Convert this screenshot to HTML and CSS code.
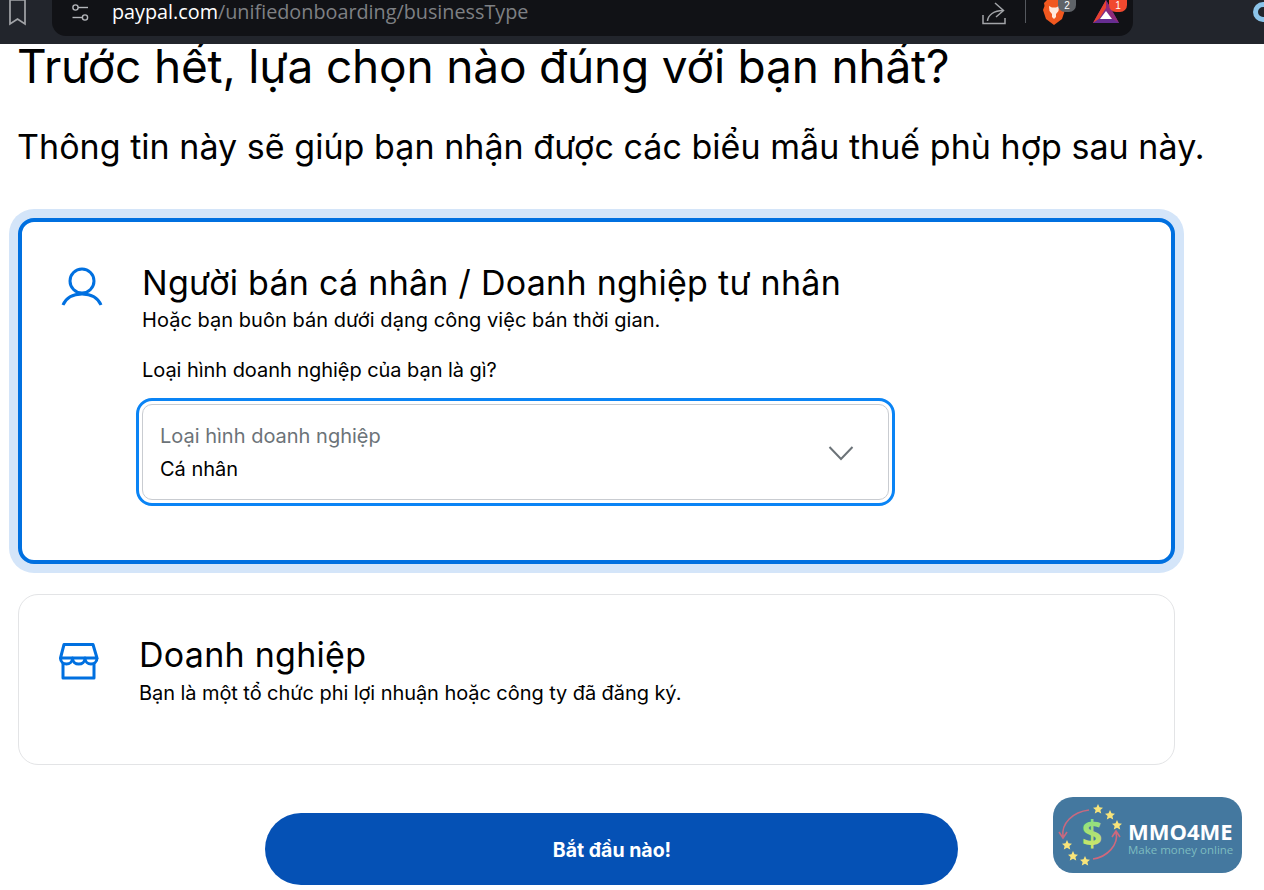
FILE: index.html
```html
<!DOCTYPE html>
<html lang="vi">
<head>
<meta charset="utf-8">
<title>PayPal</title>
<link rel="stylesheet" href="styles.css">
</head>
<body>
<header class="chrome">
  <svg class="bookmark" width="18" height="26" viewBox="0 0 18 26"><path d="M1 0h15v24L8.500 19 1 24z" fill="none" stroke="#a2a4a8" stroke-width="1.700"/></svg>
  <div class="omnibox">
    <svg class="tune" width="20" height="20" viewBox="0 0 20 20" fill="none" stroke="#b4b6ba" stroke-width="1.400"><circle cx="4.500" cy="4.500" r="2.600"/><path d="M7 4.500h10"/><circle cx="14" cy="14.500" r="2.600"/><path d="M1.500 14.500h10"/></svg>
    <div class="url"><span class="domain">paypal.com</span><span class="path">/unifiedonboarding/businessType</span></div>
    <svg class="share" width="24" height="24" viewBox="0 0 24 24" fill="none" stroke="#a2a4a8" stroke-width="1.500"><path d="M1 14v8.500h22V17"/><path d="M5.500 20C6 14 12 9.500 21 9.500"/><path d="M13 2l8.500 7.500L14 16"/></svg>
    <span class="divider"></span>
    <div class="ext ext-lion">
      <svg width="22" height="25" viewBox="0 0 22 25"><path d="M4 0h14l3 3-.5 3 1.500 4-3 9-8 6-8-6-3-9 1.500-4L1 3z" fill="#f1581f"/><path d="M6 6l3 1.500h4L16 6l-.5 5-2.500 3v3l-2 2-2-2v-3l-2.500-3z" fill="#ffe9dc"/></svg>
      <span class="badge badge-grey">2</span>
    </div>
    <div class="ext ext-bat">
      <svg width="26" height="23" viewBox="0 0 26 23"><path d="M13 0l13 23H0z" fill="#7d2c8a"/><path d="M13 0L0 23l6-4 7-11z" fill="#e8412f"/><path d="M13 0v8l6 11 7 4z" fill="#8e2a7a"/><path d="M0 23l6-4h14l6 4z" fill="#662d91"/><path d="M13 11l6 8H7z" fill="#fff"/></svg>
      <span class="badge badge-red">1</span>
    </div>
  </div>
  <span class="profile"></span>
</header>

<main class="page">
  <h1 class="title">Trước hết, lựa chọn nào đúng với bạn nhất?</h1>
  <p class="subtitle">Thông tin này sẽ giúp bạn nhận được các biểu mẫu thuế phù hợp sau này.</p>

  <section class="card card-active">
    <svg class="card-icon" width="42" height="40" viewBox="0 0 42 40" fill="none" stroke="#0070e0" stroke-width="3"><circle cx="21" cy="14" r="12"/><path d="M2 38c3-7 10-11 19-11s16 4 19 11"/></svg>
    <div class="card-body">
      <h2 class="card-title">Người bán cá nhân / Doanh nghiệp tư nhân</h2>
      <p class="card-desc">Hoặc bạn buôn bán dưới dạng công việc bán thời gian.</p>
      <p class="question">Loại hình doanh nghiệp của bạn là gì?</p>
      <div class="select-focus">
        <div class="select">
          <div class="select-text">
            <span class="select-label">Loại hình doanh nghiệp</span>
            <span class="select-value">Cá nhân</span>
          </div>
          <svg class="chevron" width="26" height="16" viewBox="0 0 26 16" fill="none" stroke="#6c7378" stroke-width="2"><path d="M1.500 2l11.500 12L24.500 2"/></svg>
        </div>
      </div>
    </div>
  </section>

  <section class="card card-plain">
    <svg class="card-icon icon-shop" width="40" height="38" viewBox="0 0 40 38" fill="none" stroke="#0070e0" stroke-width="3" stroke-linejoin="round"><path d="M5 2.500h29l4 13.500H1.500z"/><path d="M1.500 16c0 8 12 8 12 0 0 8 12.500 8 12.500 0 0 8 12 8 12 0"/><path d="M4 21v15h31V21"/></svg>
    <div class="card-body">
      <h2 class="card-title">Doanh nghiệp</h2>
      <p class="card-desc">Bạn là một tổ chức phi lợi nhuận hoặc công ty đã đăng ký.</p>
    </div>
  </section>

  <div class="actions"><button class="primary" type="button">Bắt đầu nào!</button></div>
</main>

<aside class="watermark">
  <svg width="74" height="76" viewBox="0 0 74 76">
    <defs>
      <linearGradient id="dollar-fill" x1="0" y1="0" x2="0" y2="1"><stop offset="0" stop-color="#6fdc8c"/><stop offset="1" stop-color="#e6e85f"/></linearGradient>
      <path id="star" d="M0-5l1.500 3.300 3.500.4-2.600 2.400.8 3.500L0 2.800-3.200 4.600l.8-3.500L-5-1.300l3.500-.4z"/>
    </defs>
    <g fill="#f8e47a">
      <use href="#star" x="45" y="12"/>
      <use href="#star" x="57" y="18"/>
      <use href="#star" x="64" y="28"/>
      <use href="#star" x="14" y="48"/>
      <use href="#star" x="20" y="59"/>
      <use href="#star" x="32" y="64"/>
    </g>
    <path d="M36 13C20 15 8 26 10 40M6 35l4 6 4-6" fill="none" stroke="#c8697f" stroke-width="1.600"/>
    <path d="M40 62C54 60 66 48 63 35M59 40l4-6 4 6" fill="none" stroke="#d0687c" stroke-width="1.600"/>
    <text class="dollar" x="39" y="49" text-anchor="middle" fill="url(#dollar-fill)">$</text>
  </svg>
  <div class="brand">
    <span class="brand-name">MMO4ME</span>
    <span class="brand-tag">Make money online</span>
  </div>
</aside>
</body>
</html>
```

FILE: styles.css
```css
* { box-sizing: border-box; }
html, body { margin: 0; padding: 0; }
body {
  width: 1264px;
  height: 890px;
  overflow: hidden;
  position: relative;
  background: #fff;
  color: #000;
  font-family: Inter, "Liberation Sans", sans-serif;
}

.chrome {
  height: 44px;
  background: #22252c;
  display: flex;
  align-items: flex-start;
  position: relative;
}
.bookmark { margin-left: 9px; flex: none; }
.omnibox {
  width: 1081px;
  height: 36px;
  margin-left: 25px;
  background: #111216;
  border-radius: 0 0 14px 14px;
  display: flex;
  align-items: flex-start;
  padding: 0 14px 0 19px;
}
.tune { flex: none; margin-top: 3px; }
.url {
  margin-left: 21px;
  font: 19.8px/24px "Open Sans", sans-serif;
  white-space: nowrap;
  flex: 1;
}
.domain { color: #fff; }
.path { color: #7e8084; }
.share { flex: none; margin-top: 1px; }
.divider { flex: none; width: 1px; height: 23px; background: #55585e; margin: 0 0 0 19px; }
.ext { position: relative; flex: none; }
.ext-lion { margin-left: 17px; width: 22px; height: 25px; }
.ext-bat { margin-left: 28px; width: 26px; height: 23px; }
.ext svg { display: block; }
.badge {
  position: absolute;
  top: 0;
  font: 10px/12px "Liberation Sans", sans-serif;
  color: #fff;
  text-align: center;
  height: 12px;
  border-radius: 0 0 7px 7px;
  width: 18px;
}
.badge-grey { background: #5f6368; left: 15px; }
.badge-red { background: #f1492f; left: 16px; }
.profile {
  position: absolute;
  left: 1253px;
  top: 2px;
  width: 20px;
  height: 20px;
  border-radius: 50%;
  border: 5px solid #8cc4ea;
}

.page { padding: 0 0 0 18px; }
.title {
  margin: -1px 0 0 -1px;
  font-size: 46px;
  font-weight: 400;
  line-height: 46px;
  letter-spacing: -0.18px;
}
.subtitle {
  margin: 38px 0 0 -1px;
  font-size: 34px;
  line-height: 40px;
  letter-spacing: 0.04px;
}

.card {
  width: 1157px;
  background: #fff;
  display: flex;
}
.card-active {
  height: 346px;
  margin-top: 51px;
  border: 4px solid #0070e0;
  border-radius: 16px;
  box-shadow: 0 0 0 9px #d4e5f9;
  padding: 44px 0 0 39px;
}
.card-plain {
  height: 171px;
  margin-top: 30px;
  border: 1px solid #e3e4e6;
  border-radius: 20px;
  padding: 44px 0 0 41px;
}
.card-icon { flex: none; margin-top: 1px; }
.icon-shop { margin-top: 3px; margin-left: -1px; }
.card-active .card-body { margin-left: 39px; margin-top: -3px; }
.card-plain .card-body { margin-top: -4px; margin-left: 40px; }
.card-title {
  margin: 0;
  font-size: 34px;
  font-weight: 400;
  line-height: 40px;
  letter-spacing: 0.27px;
}
.card-desc {
  margin: 4px 0 0;
  font-size: 20px;
  line-height: 26px;
  letter-spacing: 0.04px;
}
.card-plain .card-desc { margin-top: 5px; letter-spacing: -0.07px; }
.question {
  margin: 24px 0 0;
  font-size: 20px;
  line-height: 26px;
  letter-spacing: -0.05px;
}
.select-focus {
  width: 759px;
  height: 108px;
  margin: 15px 0 0 -6px;
  border: 3px solid #0a84f5;
  border-radius: 16px;
  padding: 3px;
}
.select {
  height: 96px;
  border: 1px solid #c9ccd1;
  border-radius: 10px;
  display: flex;
  align-items: center;
  justify-content: space-between;
  padding: 0 34px 0 17px;
}
.select-text { display: flex; flex-direction: column; }
.select-label { font-size: 20px; line-height: 28px; color: #6c7378; }
.select-value { font-size: 20px; line-height: 28px; margin-top: 5px; }
.chevron { margin-top: 2px; }

.actions { width: 1186px; display: flex; justify-content: center; margin-top: 48px; }
.primary {
  width: 693px;
  height: 72px;
  border: 0;
  border-radius: 36px;
  padding: 2px 0 0 2px;
  background: #0551b5;
  color: #fff;
  font: 700 19.5px Inter, "Liberation Sans", sans-serif;
}

.watermark {
  position: absolute;
  left: 1053px;
  top: 797px;
  width: 189px;
  height: 76px;
  background: #44789f;
  border-radius: 20px;
  display: flex;
  align-items: center;
}
.watermark svg { flex: none; }
.dollar { font: 700 36px "Open Sans", sans-serif; }
.brand { display: flex; flex-direction: column; margin-left: 1px; margin-top: 6px; }
.brand-name { font: 700 22px/24px "Open Sans", sans-serif; color: #fff; }
.brand-tag { font: 11.500px/14px "Open Sans", sans-serif; color: #7dbcc0; }
```
